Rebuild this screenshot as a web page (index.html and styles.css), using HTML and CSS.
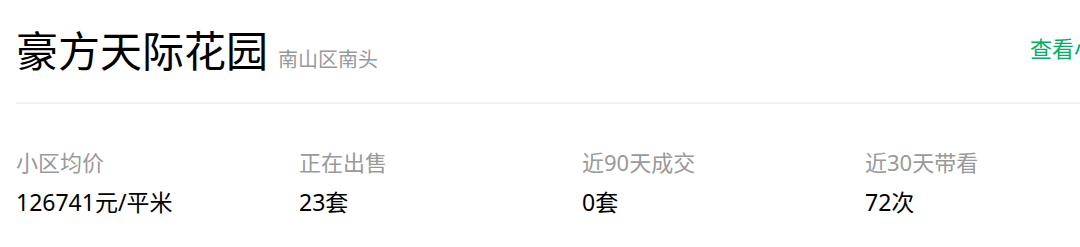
FILE: index.html
```html
<!DOCTYPE html>
<html>
<head>
	<title>小区概况</title>
	<meta charset="utf-8">
	<link rel="stylesheet" href="styles.css">
</head>
<body>

	<div class="xiaoqu">
		<div class="title-bar">
			<div class="title">
				<h1>豪方天际花园</h1>
				<span class="area">南山区南头</span>
			</div>
			<a class="more" href="#">查看小区详情</a>
		</div>

		<div class="stats">
			<div class="item">
				<div class="label">小区均价</div>
				<div class="value">126741元/平米</div>
			</div>
			<div class="item">
				<div class="label">正在出售</div>
				<div class="value">23套</div>
			</div>
			<div class="item">
				<div class="label">近90天成交</div>
				<div class="value">0套</div>
			</div>
			<div class="item">
				<div class="label">近30天带看</div>
				<div class="value">72次</div>
			</div>
		</div>
	</div>

</body>
</html>
```

FILE: styles.css
```css
html, body{
	margin: 0;
	padding: 0;
	overflow: hidden;
	background: #fff;
}

body{
	font-family: "Noto Sans", "Noto Sans CJK SC", sans-serif;
	color: #000;
}

.xiaoqu{
	width: 1146px;
	margin-left: 16px;
}

.title-bar{
	display: flex;
	justify-content: space-between;
	align-items: center;
	height: 102px;
	border-bottom: 2px solid #f1f1f1;
}

.title{
	display: flex;
	align-items: baseline;
	gap: 10px;
}

.title h1{
	margin: 0;
	font-size: 42px;
	font-weight: normal;
	line-height: 1;
}

.area{
	font-size: 20px;
	color: #999;
}

.more{
	font-size: 22px;
	color: #00ae66;
	text-decoration: none;
	margin-top: -8px;
}

.stats{
	display: flex;
	padding-top: 42px;
}

.item{
	width: 283px;
}

.label{
	font-size: 22px;
	color: #999;
	line-height: 32px;
}

.value{
	font-size: 23px;
	line-height: 32px;
	margin-top: 8px;
}
```
